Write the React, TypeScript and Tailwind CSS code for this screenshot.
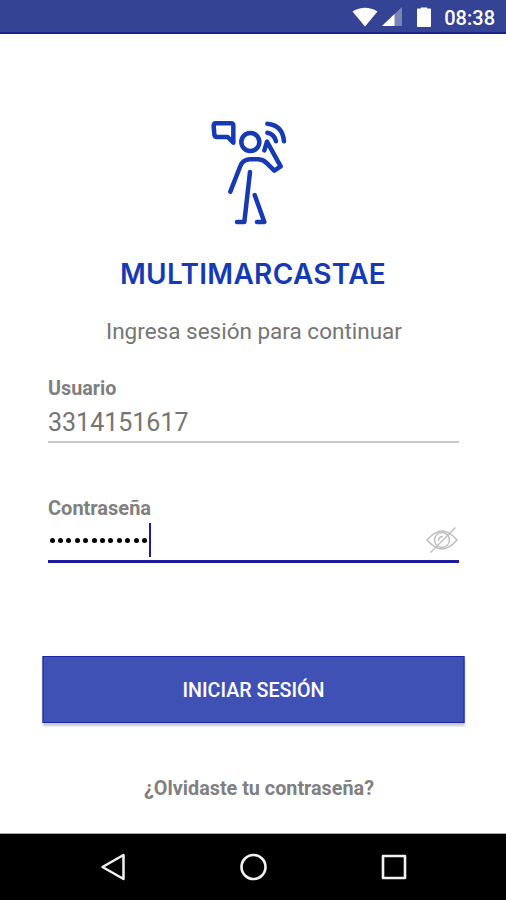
import React from "react"

const StatusBar: React.FC = () => {
    return (
        <header className="flex h-[34px] shrink-0 items-center justify-end border-b-2 border-[#1b2390] bg-[#354394] pr-[11px] text-white">
            <svg className="mt-px h-5 w-[26px]" viewBox="0 0 26 20" fill="currentColor">
                <path d="M0.5 4.5Q13 -3 25.500 4.500L13 19.500Z" />
            </svg>
            <svg className="ml-[4px] mt-px h-5 w-5" viewBox="0 0 20 20" fill="currentColor">
                <path d="M20 0V19H0Z" opacity=".35" />
                <path d="M12.500 7V19H0Z" />
            </svg>
            <svg className="ml-[15px] mt-px h-5 w-[14px]" viewBox="0 0 14 20" fill="currentColor">
                <path d="M4 0.500H10V1.500H13Q14 1.500 14 2.500V19Q14 20 13 20H1Q0 20 0 19V2.500Q0 1.500 1 1.500H4Z" />
            </svg>
            <span className="ml-[13px] mt-[3px] text-[20px] leading-6 font-medium">08:38</span>
        </header>
    )
}

const Logo: React.FC = () => {
    return (
        <svg
            className="mr-[6px] h-[125px] w-[110px]"
            viewBox="0 0 330 375"
            fill="none"
            stroke="#163ab3"
            strokeWidth="13.500"
            strokeLinecap="round"
            strokeLinejoin="round"
        >
            {/* speech bubble */}
            <path d="M62 40H108Q115 40 115 47V98L98 81H66Q59 81 58 74L56 48Q56 40 62 40Z" />
            {/* head and body */}
            <circle cx="166" cy="96" r="27" />
            <path d="M106 245L136 168Q144 149 164 148H190Q205 149 216 160L238 182L257 169L216 95L208 121" />
            <path d="M165 186L148 336H126" />
            <path d="M179 255L208 336H186" />
            {/* signal */}
            <path d="M217 68Q238 72 243 94" />
            <path d="M217 41Q263 45 267 94" />
        </svg>
    )
}

const EyeOffIcon: React.FC = () => {
    return (
        <svg className="h-7 w-8" viewBox="0 0 32 28" fill="none" stroke="#c0c0c0" strokeWidth="1.500">
            <path d="M1 14Q9 5 16 5Q23 5 31 14Q23 23 16 23Q9 23 1 14Z" />
            <circle cx="16" cy="14" r="7.500" />
            <path d="M4.500 26.500L29.500 1.500" />
            <path d="M12.500 15Q12.500 10.500 17 10.500" />
        </svg>
    )
}

const NavigationBar: React.FC = () => {
    return (
        <nav className="flex h-[67px] shrink-0 items-center justify-between border-t border-[#aaa] bg-black pr-[98px] pl-[100px] text-[#f2f2f2]">
            <svg className="h-7 w-[26px]" viewBox="0 0 26 28" fill="none" stroke="currentColor" strokeWidth="2.500" strokeLinejoin="round">
                <path d="M23.500 2V26L2.500 14Z" />
            </svg>
            <svg className="h-7 w-7" viewBox="0 0 28 28" fill="none" stroke="currentColor" strokeWidth="2.600">
                <circle cx="14.500" cy="14" r="12" />
            </svg>
            <svg className="h-7 w-7" viewBox="0 0 28 28" fill="none" stroke="currentColor" strokeWidth="2.600" strokeLinejoin="round">
                <rect x="3" y="3" width="22" height="22" />
            </svg>
        </nav>
    )
}

const App: React.FC = () => {
    return (
        <div className="flex h-[900px] w-[506px] flex-col overflow-hidden bg-white font-['Roboto',sans-serif] text-[#757575]">
            <StatusBar />
            <main className="flex flex-1 flex-col items-center pt-[76px]">
                <Logo />
                <h1 className="mt-[21px] whitespace-nowrap font-['Inter',sans-serif] text-[28px] leading-9 font-semibold tracking-[0.3px] text-[#163ab3]">
                    MULTIMARCASTAE
                </h1>
                <p className="mt-[25px] pl-[2px] text-[22.5px] leading-7 whitespace-nowrap">Ingresa sesión para continuar</p>

                <div className="mt-[32px] flex w-[411px] flex-col">
                    <span className="pl-[0.5px] text-[19.800px] leading-6 font-bold text-[#808080]">Usuario</span>
                    <div className="flex h-[42px] items-center border-b-2 border-[#c8c8c8] pt-[4px] pl-[0.5px] text-[25px]">3314151617</div>
                </div>

                <div className="mt-[53px] flex w-[411px] flex-col">
                    <span className="pl-[0.5px] text-[20px] leading-6 font-bold text-[#808080]">Contraseña</span>
                    <div className="flex h-[43px] items-center border-b-[3px] border-[#1c1c9c]">
                        <div className="flex gap-[3.430px] pt-px pl-[2px]">
                            {Array.from({ length: 12 }, (_, i) => (
                                <span key={i} className="size-[5px] rounded-full bg-black" />
                            ))}
                        </div>
                        <span className="ml-[2px] h-[34px] w-[2px] bg-[#1c1c9c]" />
                        <span className="mr-px ml-auto">
                            <EyeOffIcon />
                        </span>
                    </div>
                </div>

                <button className="mt-[93px] h-[67px] w-[422px] translate-x-[0.5px] border border-[#1a25a0] bg-[#3f51b5] pt-[3px] text-[19.700px] font-medium text-white shadow-[0_3px_2px_rgba(0,0,0,0.22)]">
                    INICIAR SESIÓN
                </button>
                <a className="mt-[54px] pl-[12px] text-[19.800px] leading-6 font-bold text-[#808080]">¿Olvidaste tu contraseña?</a>
            </main>
            <NavigationBar />
        </div>
    )
}

export default App
